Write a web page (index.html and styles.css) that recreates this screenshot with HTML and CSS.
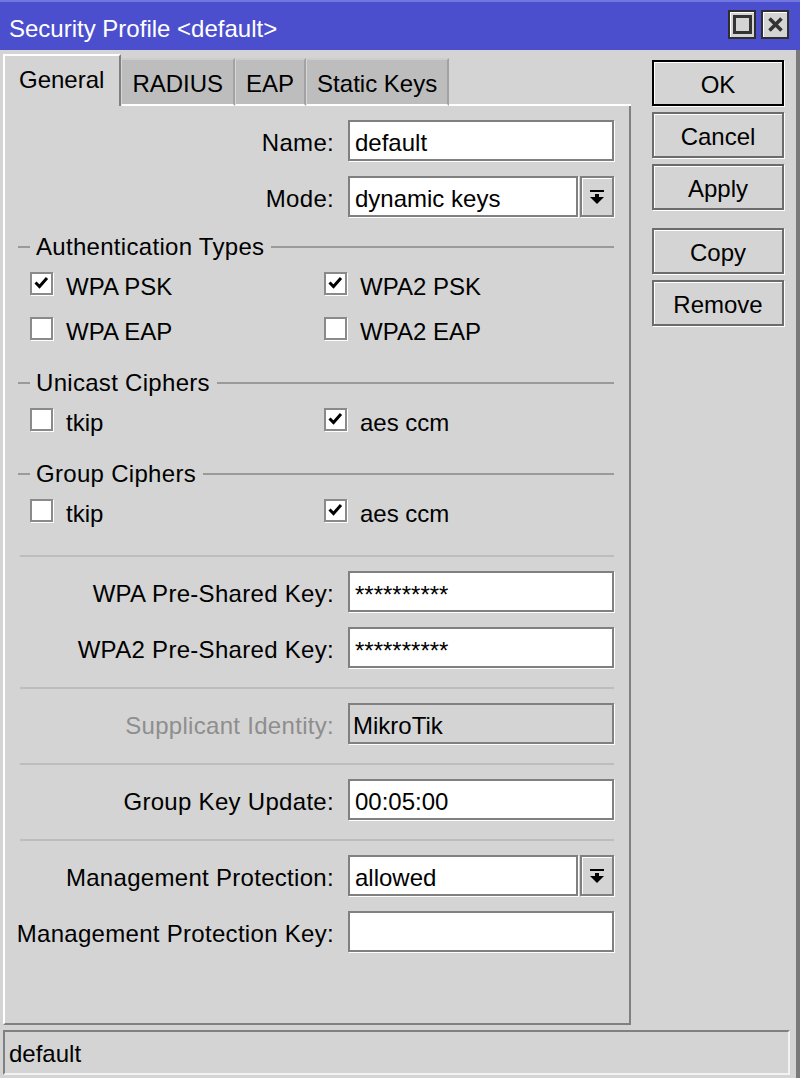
FILE: index.html
```html
<!DOCTYPE html>
<html>
<head>
<meta charset="utf-8">
<link rel="stylesheet" href="styles.css">
</head>
<body>
<div class="window">
  <div class="titlebar">
    <span class="title">Security Profile &lt;default&gt;</span>
    <div class="title-btns">
      <span class="tbtn"><svg width="19" height="19" viewBox="0 0 19 19"><rect x="1.5" y="1.5" width="16" height="16" fill="none" stroke="#333" stroke-width="3"/></svg></span>
      <span class="tbtn"><svg width="15" height="15" viewBox="0 0 15 15"><path d="M1.5 1.5L13.5 13.5M13.5 1.5L1.5 13.5" stroke="#333" stroke-width="3.6" fill="none"/></svg></span>
    </div>
  </div>
  <div class="frame">
    <div class="content">
      <div class="main">
        <div class="tabs">
          <div class="tab active">General</div>
          <div class="tab">RADIUS</div>
          <div class="tab">EAP</div>
          <div class="tab">Static Keys</div>
          <div class="tab-fill"></div>
        </div>
        <div class="panel">
          <div class="field"><span class="label">Name:</span><div class="input">default</div></div>
          <div class="field"><span class="label">Mode:</span>
            <div class="select"><div class="input">dynamic keys</div><span class="drop"><svg width="14" height="15" viewBox="0 0 14 15"><rect x="0" y="0" width="14" height="2" fill="#000"/><rect x="5" y="4" width="4" height="3" fill="#000"/><polygon points="0,7 14,7 7,14" fill="#000"/></svg></span></div>
          </div>

          <div class="group">
            <div class="ghead"><span class="dash"></span><span class="gtitle">Authentication Types</span><span class="gline"></span></div>
            <div class="cb-row">
              <span class="cb"><span class="box"><svg width="19" height="19" viewBox="0 0 19 19"><path d="M3.5 8.5L7.5 12.5L15 4" stroke="#000" stroke-width="3" fill="none"/></svg></span><span class="cbt">WPA PSK</span></span>
              <span class="cb"><span class="box"><svg width="19" height="19" viewBox="0 0 19 19"><path d="M3.5 8.5L7.5 12.5L15 4" stroke="#000" stroke-width="3" fill="none"/></svg></span><span class="cbt">WPA2 PSK</span></span>
            </div>
            <div class="cb-row">
              <span class="cb"><span class="box"></span><span class="cbt">WPA EAP</span></span>
              <span class="cb"><span class="box"></span><span class="cbt">WPA2 EAP</span></span>
            </div>
          </div>

          <div class="group">
            <div class="ghead"><span class="dash"></span><span class="gtitle">Unicast Ciphers</span><span class="gline"></span></div>
            <div class="cb-row">
              <span class="cb"><span class="box"></span><span class="cbt">tkip</span></span>
              <span class="cb"><span class="box"><svg width="19" height="19" viewBox="0 0 19 19"><path d="M3.5 8.5L7.5 12.5L15 4" stroke="#000" stroke-width="3" fill="none"/></svg></span><span class="cbt">aes ccm</span></span>
            </div>
          </div>

          <div class="group">
            <div class="ghead"><span class="dash"></span><span class="gtitle">Group Ciphers</span><span class="gline"></span></div>
            <div class="cb-row">
              <span class="cb"><span class="box"></span><span class="cbt">tkip</span></span>
              <span class="cb"><span class="box"><svg width="19" height="19" viewBox="0 0 19 19"><path d="M3.5 8.5L7.5 12.5L15 4" stroke="#000" stroke-width="3" fill="none"/></svg></span><span class="cbt">aes ccm</span></span>
            </div>
          </div>

          <div class="sep sep-first"></div>
          <div class="field"><span class="label">WPA Pre-Shared Key:</span><div class="input pw">**********</div></div>
          <div class="field"><span class="label">WPA2 Pre-Shared Key:</span><div class="input pw">**********</div></div>
          <div class="sep"></div>
          <div class="field"><span class="label disabled">Supplicant Identity:</span><div class="input ro">MikroTik</div></div>
          <div class="sep"></div>
          <div class="field"><span class="label">Group Key Update:</span><div class="input">00:05:00</div></div>
          <div class="sep"></div>
          <div class="field"><span class="label">Management Protection:</span>
            <div class="select"><div class="input">allowed</div><span class="drop"><svg width="14" height="15" viewBox="0 0 14 15"><rect x="0" y="0" width="14" height="2" fill="#000"/><rect x="5" y="4" width="4" height="3" fill="#000"/><polygon points="0,7 14,7 7,14" fill="#000"/></svg></span></div>
          </div>
          <div class="field"><span class="label">Management Protection Key:</span><div class="input"></div></div>
        </div>
      </div>
      <div class="side">
        <span class="btn default">OK</span>
        <span class="btn">Cancel</span>
        <span class="btn">Apply</span>
        <span class="btn gap">Copy</span>
        <span class="btn">Remove</span>
      </div>
    </div>
    <div class="status"><span>default</span></div>
  </div>
</div>
</body>
</html>
```

FILE: styles.css
```css
* { box-sizing: border-box; }
html, body { margin: 0; padding: 0; }
body {
  font-family: "Liberation Sans", Arial, sans-serif;
  font-size: 24px;
  color: #000;
  background: #d4d4d4;
}
.window {
  width: 800px;
  height: 1078px;
  display: flex;
  flex-direction: column;
  background: #d4d4d4;
}
.titlebar {
  height: 50px;
  flex: none;
  background: #4b4fcd;
  border-top: 2px solid #7276e0;
  display: flex;
  align-items: flex-start;
  justify-content: space-between;
  padding: 8px 11px 0 9px;
}
.title {
  color: #fff;
  line-height: 28px;
  padding-top: 5px;
  white-space: nowrap;
}
.title-btns { display: flex; gap: 5px; }
.tbtn {
  width: 28px;
  height: 29px;
  background: #d4d4d4;
  border: 2px solid #2e2e2e;
  box-shadow: inset 1px 1px 0 #fff;
  display: flex;
  align-items: center;
  justify-content: center;
}
.tbtn svg { display: block; }
.frame {
  flex: 1;
  display: flex;
  flex-direction: column;
  border-right: 4px solid #7a7a7a;
}
.content {
  flex: 1;
  display: flex;
  padding: 4px 0 0 3px;
  min-height: 0;
}
.main {
  width: 628px;
  display: flex;
  flex-direction: column;
}
.tabs {
  height: 52px;
  display: flex;
  align-items: flex-end;
  flex: none;
}
.tab {
  height: 48px;
  display: flex;
  align-items: center;
  padding: 3px 10px 0 10px;
  background: #bdbdbd;
  border-top: 2px solid #cdcdcd;
  border-left: 1px solid #d6d6d6;
  border-right: 2px solid #a2a2a2;
  border-bottom: 2px solid #fff;
  white-space: nowrap;
}
.tab.active {
  height: 52px;
  background: #d4d4d4;
  border-top: 2px solid #fff;
  border-left: 2px solid #fff;
  border-right: 2px solid #808080;
  border-bottom: none;
  padding: 0 15px 3px 14px;
}
.tab-fill {
  flex: 1;
  height: 2px;
  background: #fff;
}
.panel {
  flex: 1;
  border-left: 2px solid #fff;
  border-right: 2px solid #808080;
  border-bottom: 2px solid #808080;
  padding: 14px 15px 0 13px;
}
.field {
  display: grid;
  grid-template-columns: minmax(0, 1fr) 266px;
  column-gap: 14px;
  height: 41px;
}
.field + .field { margin-top: 15px; }
.label {
  align-self: center;
  display: flex;
  justify-content: flex-end;
  white-space: nowrap;
  padding-top: 4px;
  letter-spacing: 0.3px;
  min-width: 0;
}
.label.disabled { color: #8e8e8e; }
.input {
  height: 41px;
  display: flex;
  align-items: center;
  background: #fff;
  border: 2px solid #808080;
  box-shadow: 1px 1px 0 #fff;
  padding: 4px 5px 0 5px;
  white-space: nowrap;
  overflow: hidden;
}
.input.pw { align-items: flex-start; padding-top: 8px; }
.input.ro { background: #d4d4d4; padding-left: 3px; }
.select {
  display: flex;
  gap: 2px;
}
.select .input { flex: 1; }
.drop {
  width: 34px;
  height: 41px;
  flex: none;
  border: 2px solid #808080;
  box-shadow: inset 1px 1px 0 #fff, 1px 1px 0 #fff;
  background: #d4d4d4;
  display: flex;
  align-items: center;
  justify-content: center;
  padding-top: 1px;
}
.drop svg { display: block; }
.group { margin-top: 18px; }
.field + .group { margin-top: 16px; }
.ghead {
  height: 28px;
  display: flex;
  align-items: center;
}
.dash { width: 12px; height: 2px; background: #9a9a9a; }
.gtitle { padding: 0 7px 0 6px; white-space: nowrap; letter-spacing: 0.3px; }
.gline { flex: 1; height: 2px; background: #9a9a9a; }
.cb-row {
  height: 45px;
  display: grid;
  grid-template-columns: 294px 1fr;
  align-items: center;
  padding-left: 12px;
  padding-top: 6px;
}
.cb {
  display: flex;
  align-items: center;
  white-space: nowrap;
}
.box {
  width: 23px;
  height: 23px;
  flex: none;
  background: #fff;
  border: 2px solid #8a8a8a;
  box-shadow: 1px 1px 0 #fff;
  margin-right: 13px;
  margin-bottom: 7px;
  display: flex;
}
.box svg { display: block; }
.sep {
  height: 2px;
  background: #bdbdbd;
  margin: 19px 0 14px 2px;
}
.sep-first { margin-top: 22px; }
.side {
  width: 132px;
  margin-left: 21px;
  padding-top: 6px;
  display: flex;
  flex-direction: column;
}
.btn {
  height: 46px;
  display: flex;
  align-items: center;
  justify-content: center;
  padding-top: 4px;
  border: 2px solid #6c6c6c;
  box-shadow: inset 1px 1px 0 #fff, 1px 1px 0 #fff;
  margin-bottom: 6px;
  background: #d4d4d4;
}
.btn.default { border-color: #000; }
.btn.gap { margin-top: 12px; }
.status {
  height: 45px;
  flex: none;
  margin: 5px 6px 3px 3px;
  border-top: 2px solid #808080;
  border-left: 2px solid #808080;
  border-right: 2px solid #f2f2f2;
  border-bottom: 2px solid #f2f2f2;
  padding: 3px 4px 0;
  display: flex;
  align-items: center;
}
```
